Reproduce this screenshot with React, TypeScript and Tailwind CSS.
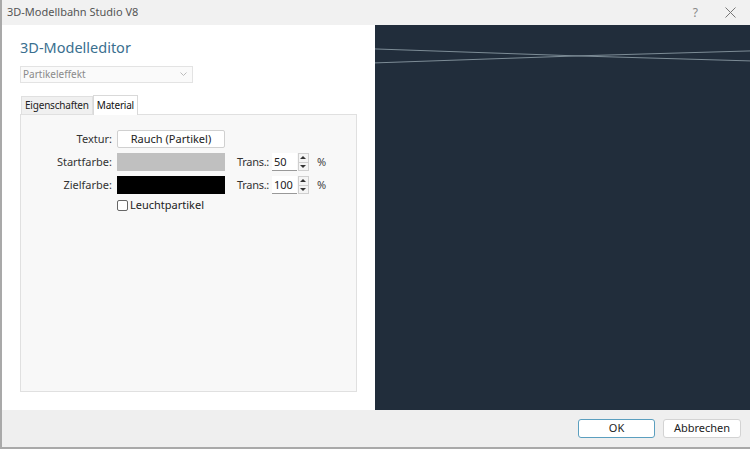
const font = { fontFamily: '"Noto Sans", "Open Sans", sans-serif' }

function Spin({ value }: { value: string }) {
  return (
    <div className="flex items-center">
      <span className="text-[11px] text-[#333] whitespace-nowrap tracking-[-0.3px] mr-[3px]">Trans.:</span>
      <div className="w-[25px] h-[18px] bg-white border-b border-[#999] text-[11px] text-[#222] pl-[2px] leading-[18px]">{value}</div>
      <div className="flex flex-col w-[11px] h-[18px] ml-[1px]">
        <div className="flex-1 flex items-center justify-center bg-[#f4f4f4] border border-[#cfcfcf]">
          <div className="w-0 h-0 border-l-[3px] border-r-[3px] border-b-[3px] border-l-transparent border-r-transparent border-b-[#333]" />
        </div>
        <div className="flex-1 flex items-center justify-center bg-[#f4f4f4] border border-t-0 border-[#cfcfcf]">
          <div className="w-0 h-0 border-l-[3px] border-r-[3px] border-t-[3px] border-l-transparent border-r-transparent border-t-[#333]" />
        </div>
      </div>
      <span className="text-[11px] text-[#444] ml-[8px]">%</span>
    </div>
  )
}

export default function App() {
  return (
    <div style={font} className="w-[750px] h-[449px] flex flex-col bg-white border-l-2 border-b-2 border-[#a9a9a9] overflow-hidden">
      {/* Title bar */}
      <div className="h-[25px] shrink-0 bg-[#f1f1f1] flex items-center justify-between pl-[5px] pr-[14px]">
        <span className="text-[11px] text-[#555]">3D-Modellbahn Studio V8</span>
        <div className="flex items-center gap-[27px] text-[#888]">
          <span className="text-[12px]">?</span>
          <svg width="11" height="11" viewBox="0 0 11 11"><path d="M0.5 0.5 L10.5 10.5 M10.5 0.5 L0.5 10.5" stroke="#777" strokeWidth="1" /></svg>
        </div>
      </div>

      {/* Main */}
      <div className="flex-1 flex min-h-0">
        <div className="w-[373px] shrink-0 bg-white pl-[18px] pt-[12px]">
          <h1 className="text-[14.5px] text-[#3a6f8f] leading-[20px] h-[20px]">3D-Modelleditor</h1>
          <div className="mt-[9px] w-[173px] h-[17px] border border-[#e3e3e3] bg-[#fafafa] flex items-center justify-between px-[2px]">
            <span className="text-[10px] text-[#8a8a8a]">Partikeleffekt</span>
            <svg width="7" height="5" viewBox="0 0 7 5" className="mr-[3px]"><path d="M0.5 0.5 L3.5 3.5 L6.5 0.5" fill="none" stroke="#bbb" /></svg>
          </div>

          {/* Tabs */}
          <div className="mt-[11px] flex items-end h-[20px] pl-[1px]">
            <div className="h-[18px] px-[3px] bg-[#f0f0f0] border border-b-0 border-[#e0e0e0] text-[10px] tracking-[-0.2px] text-[#222] flex items-center">Eigenschaften</div>
            <div className="h-[20px] px-[3px] bg-white border border-b-0 border-[#d9d9d9] text-[10px] tracking-[-0.2px] text-[#111] flex items-center relative top-[1px]">Material</div>
          </div>
          <div className="w-[337px] h-[278px] bg-[#f8f8f8] border border-[#e0e0e0] pt-[15px] flex flex-col gap-[4px]">
            <div className="flex items-center h-[18px]">
              <span className="w-[96px] text-right text-[11px] text-[#333] pr-[5px]">Textur:</span>
              <div className="w-[108px] h-[18px] bg-white border border-[#d0d0d0] rounded-[2px] flex items-center justify-center text-[11px] text-[#222]">Rauch (Partikel)</div>
            </div>
            <div className="flex items-center h-[18px] mt-[1px]">
              <span className="w-[96px] text-right text-[11px] text-[#333] pr-[5px]">Startfarbe:</span>
              <div className="w-[108px] h-[18px] bg-[#c0c0c0]" />
              <div className="ml-[12px]"><Spin value="50" /></div>
            </div>
            <div className="flex items-center h-[18px] mt-[1px]">
              <span className="w-[96px] text-right text-[11px] text-[#333] pr-[5px]">Zielfarbe:</span>
              <div className="w-[108px] h-[18px] bg-black" />
              <div className="ml-[12px]"><Spin value="100" /></div>
            </div>
            <div className="flex items-center h-[12px] mt-[1px] pl-[96px]">
              <div className="w-[11px] h-[11px] border border-[#666] rounded-[2px] bg-white" />
              <span className="ml-[2px] text-[11px] text-[#222]">Leuchtpartikel</span>
            </div>
          </div>
        </div>

        {/* 3D view */}
        <div className="flex-1 bg-[#212d3b]">
          <svg width="100%" height="100%" viewBox="0 0 375 386" preserveAspectRatio="none">
            <path d="M0 24 L202 31 L375 36" fill="none" stroke="#7d8d97" strokeWidth="1" />
            <path d="M0 38 L202 31 L375 26" fill="none" stroke="#7d8d97" strokeWidth="1" />
          </svg>
        </div>
      </div>

      {/* Footer */}
      <div className="h-[37px] shrink-0 bg-[#efefef] flex items-center justify-end gap-[8px] pr-[9px]">
        <button className="w-[77px] h-[19px] bg-white border border-[#5b9fbf] rounded-[3px] text-[11px] text-[#222]">OK</button>
        <button className="w-[78px] h-[19px] bg-white border border-[#d3d3d3] rounded-[3px] text-[11px] text-[#222]">Abbrechen</button>
      </div>
    </div>
  )
}
